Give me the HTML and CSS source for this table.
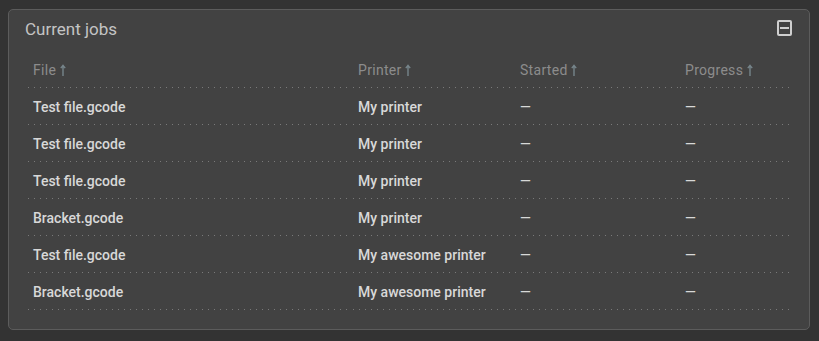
FILE: index.html
```html
<!DOCTYPE html>
<html>
<head>
<meta charset="utf-8">
<link rel="stylesheet" href="styles.css">
</head>
<body>
<div class="card">
  <div class="card-head">
    <span class="title">Current jobs</span>
    <span class="collapse"><span class="bar"></span></span>
  </div>
  <table class="jobs">
    <colgroup><col class="c1"><col class="c2"><col class="c3"><col class="c4"></colgroup>
    <thead>
      <tr>
        <th>File <svg class="arr" viewBox="0 0 6 12"><path d="M3 1.5V12M0.8 4.2L3 1.3L5.2 4.2" fill="none" stroke="currentColor" stroke-width="1.4"/></svg></th>
        <th>Printer <svg class="arr" viewBox="0 0 6 12"><path d="M3 1.5V12M0.8 4.2L3 1.3L5.2 4.2" fill="none" stroke="currentColor" stroke-width="1.4"/></svg></th>
        <th>Started <svg class="arr" viewBox="0 0 6 12"><path d="M3 1.5V12M0.8 4.2L3 1.3L5.2 4.2" fill="none" stroke="currentColor" stroke-width="1.4"/></svg></th>
        <th>Progress <svg class="arr" viewBox="0 0 6 12"><path d="M3 1.5V12M0.8 4.2L3 1.3L5.2 4.2" fill="none" stroke="currentColor" stroke-width="1.4"/></svg></th>
      </tr>
    </thead>
    <tbody>
      <tr><td>Test file.gcode</td><td>My printer</td><td>—</td><td>—</td></tr>
      <tr><td>Test file.gcode</td><td>My printer</td><td>—</td><td>—</td></tr>
      <tr><td>Test file.gcode</td><td>My printer</td><td>—</td><td>—</td></tr>
      <tr><td>Bracket.gcode</td><td>My printer</td><td>—</td><td>—</td></tr>
      <tr><td>Test file.gcode</td><td>My awesome printer</td><td>—</td><td>—</td></tr>
      <tr><td>Bracket.gcode</td><td>My awesome printer</td><td>—</td><td>—</td></tr>
    </tbody>
  </table>
</div>
</body>
</html>
```
FILE: styles.css
```css
html, body {
  margin: 0;
  padding: 0;
  background: #333333;
  font-family: Roboto, "Liberation Sans", sans-serif;
}
body {
  padding: 9px 9px 0 8px;
  height: 341px;
  box-sizing: border-box;
}
.card {
  background: #424242;
  border: 1px solid #5c5c5c;
  border-radius: 5px;
  padding: 0 17px 19px 16px;
}
.card-head {
  height: 41px;
  display: flex;
  align-items: center;
  justify-content: space-between;
}
.title {
  font-size: 17px;
  color: #c4c4c4;
  margin-top: -3px;
}
.collapse {
  width: 11px;
  height: 12px;
  border: 2px solid #cfcfcf;
  border-radius: 2px;
  display: flex;
  align-items: center;
  justify-content: center;
  margin-right: 0;
  margin-top: -6px;
}
.bar {
  width: 9px;
  height: 2px;
  background: #cfcfcf;
}
.jobs {
  width: 765px;
  margin-left: 2px;
  border-collapse: collapse;
  table-layout: fixed;
}
.c1 { width: 325px; }
.c2 { width: 162px; }
.c3 { width: 165px; }
.c4 { width: 113px; }
.jobs th, .jobs td {
  padding: 0 6px;
  text-align: left;
  font-size: 14px;
  background-image: linear-gradient(to right, #7a7a7a 1px, transparent 1px);
  background-size: 6px 1px;
  background-repeat: repeat-x;
  background-position: 1px bottom;
  white-space: nowrap;
}
.jobs th {
  height: 36px;
  font-weight: 400;
  color: #8c8c8c;
  letter-spacing: 0.3px;
  padding-top: 1px;
}
.jobs td {
  height: 37px;
  font-weight: 500;
  color: #d8d8d8;
}
.arr {
  width: 6px;
  height: 12px;
  color: #76858b;
  vertical-align: -1px;
}
```
